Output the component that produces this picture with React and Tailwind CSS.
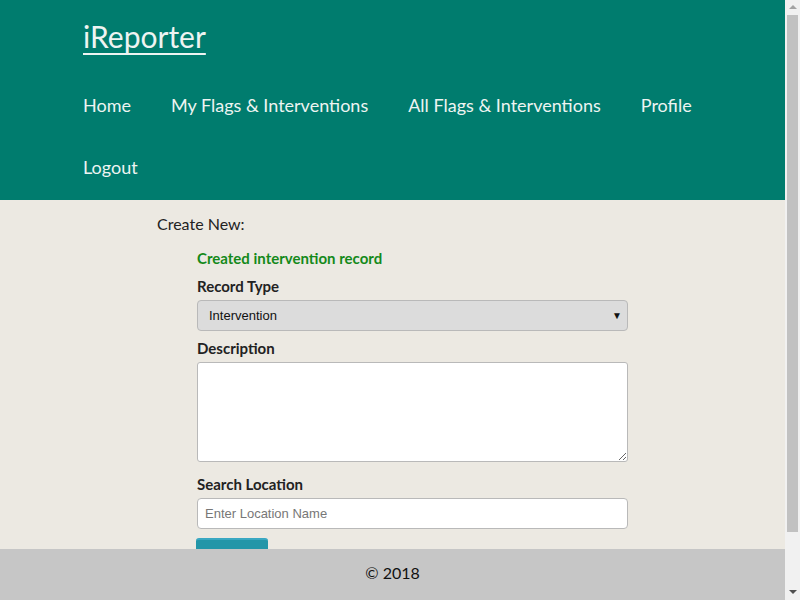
import React from "react";

function FakeScrollbar() {
  return (
    <div className="fixed top-0 right-0 bottom-0 w-[15px] bg-[#f1f1f1] flex flex-col items-center">
      <div className="h-[15px] w-full flex items-center justify-center">
        <svg width="8" height="5" viewBox="0 0 8 5"><polygon points="4,0 8,4 0,4" fill="#a3a3a3" /></svg>
      </div>
      <div className="w-[11px] h-[517px] bg-[#c1c1c1]" />
      <div className="flex-1" />
      <div className="h-[15px] w-full flex items-center justify-center">
        <svg width="8" height="5" viewBox="0 0 8 5"><polygon points="0,0 8,0 4,4" fill="#505050" /></svg>
      </div>
    </div>
  );
}

export default function App() {
  const nav = ["Home", "My Flags & Interventions", "All Flags & Interventions", "Profile", "Logout"];
  return (
    <div className="min-h-screen bg-[#f1f1f1]" style={{ fontFamily: "Lato, 'Noto Sans', sans-serif" }}>
      <div className="mr-[15px] min-h-screen bg-[#ece9e2] text-[#222]">
        <header className="bg-[#007c6e] h-[200px] px-[83px] text-[#eef4f2]">
          <div className="h-[74px] flex items-center pb-[2px]">
            <a className="text-[30px] leading-none underline decoration-[2px] underline-offset-[5px]">iReporter</a>
          </div>
          <ul className="flex flex-wrap gap-x-[40px] text-[18px] leading-[22px]">
            {nav.map((n) => (
              <li key={n} className="py-[20px]">{n}</li>
            ))}
          </ul>
        </header>
        <main className="pl-[157px] pt-[14px] pb-[90px]">
          <div className="text-[16px] leading-[20px]">Create New:</div>
          <div className="pl-[40px] w-[471px] pt-[15px]">
            <div className="text-[15px] leading-[18px] font-bold text-[#14891a]">Created intervention record</div>
            <div className="text-[15px] leading-[18px] font-bold mt-[10px]">Record Type</div>
            <div className="mt-[5px] h-[31px] bg-[#dcdcdc] border border-[#b9b9b9] rounded-[4px] flex items-center justify-between pl-[11px] pr-[5px] text-[13px] text-[#111]" style={{ fontFamily: "'Liberation Sans', Arial, sans-serif" }}>
              <span>Intervention</span>
              <span className="text-[10px]">▼</span>
            </div>
            <div className="text-[15px] leading-[18px] font-bold mt-[8px]">Description</div>
            <textarea className="block mt-[5px] w-full h-[100px] bg-white border border-[#b9b9b9] rounded-[3px] outline-none" />
            <div className="text-[15px] leading-[18px] font-bold mt-[13px]">Search Location</div>
            <input
              placeholder="Enter Location Name"
              className="block mt-[5px] w-full h-[31px] bg-white border border-[#b9b9b9] rounded-[4px] px-[7px] text-[13px] placeholder:text-[#777] outline-none"
              style={{ fontFamily: "'Liberation Sans', Arial, sans-serif" }}
            />
            <button className="block mt-[9px] -ml-[1px] w-[72px] h-[35px] bg-[#2396a8] border-t-2 border-[#3aa8c2] rounded-[3px]"></button>
          </div>
        </main>
      </div>
      <footer className="fixed bottom-0 left-0 right-[15px] h-[51px] pb-[4px] bg-[#c6c6c6] flex items-center justify-center text-[16px] text-[#111]">
        © 2018
      </footer>
      <FakeScrollbar />
    </div>
  );
}
